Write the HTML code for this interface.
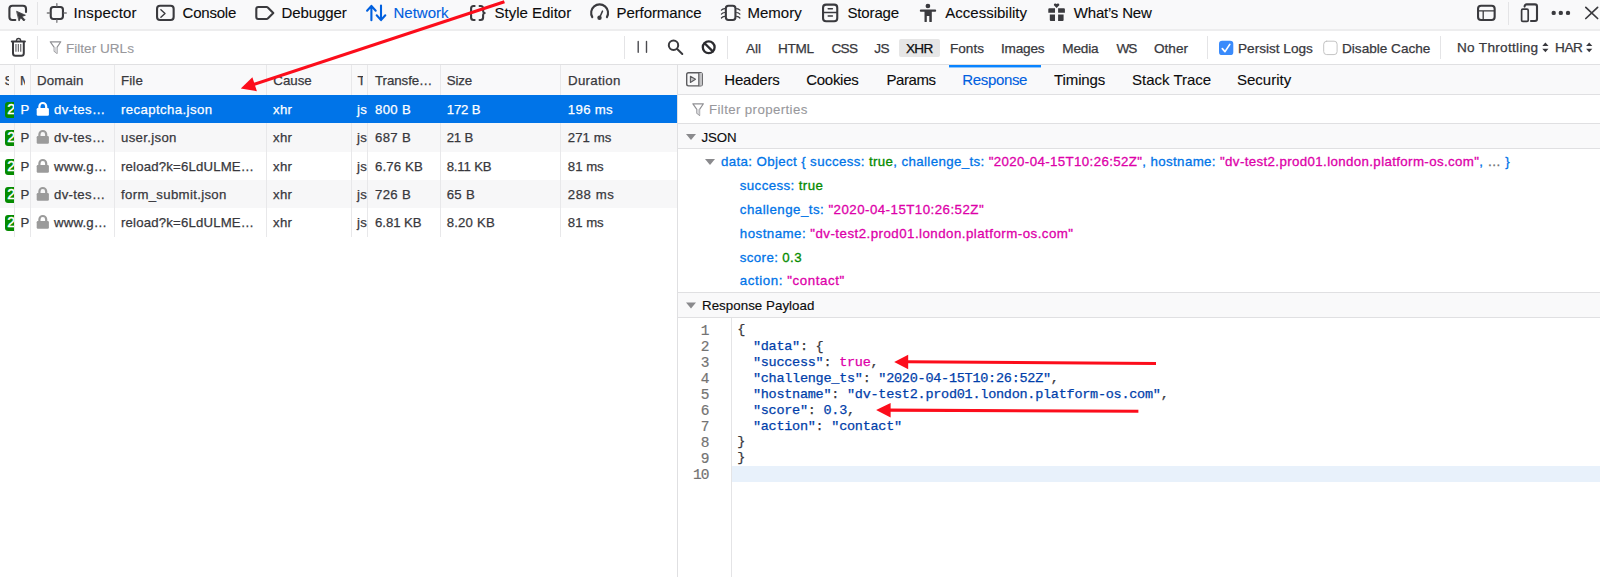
<!DOCTYPE html>
<html><head><meta charset="utf-8">
<style>
*{box-sizing:border-box;margin:0;padding:0}
html,body{width:1600px;height:577px;overflow:hidden;background:#fff}
body{position:relative;font-family:"Liberation Sans",sans-serif;color:#38383d}
.a{position:absolute;white-space:pre}
#tb{left:0;top:0;width:1600px;height:29px;background:#f9f9fa}
.hl{position:absolute;height:1px}
.tab{font-size:15px;line-height:20px;top:3.4px;color:#0c0c0d;margin-left:.5px;-webkit-text-stroke:.12px}
.tab.sel{color:#0060df}
.ic{position:absolute;overflow:visible}
.vsep{position:absolute;width:1px;background:#e4e4e6}
.ft{font-size:13.6px;line-height:20px;top:39px;color:#38383d;-webkit-text-stroke:.25px}
#hd{left:0;top:65px;width:677px;height:30px;background:#f9f9fa}
.ht{font-size:13.3px;line-height:20px;top:71px;color:#38383d;letter-spacing:.12px;-webkit-text-stroke:.25px}
.row{left:0;width:677px}
.cd{position:absolute;top:65px;width:1px;height:172px;background:#e8e8ea}
.ct{font-size:13.2px;line-height:20px;color:#38383d;letter-spacing:.33px;-webkit-text-stroke:.25px}
.w{color:#fff}
#rp{left:677px;top:65px;width:1px;height:512px;background:#e0e0e2}
#rt{left:678px;top:65px;width:922px;height:29px;background:#f9f9fa}
.rtab{font-size:15px;line-height:20px;top:69.6px;color:#0c0c0d;-webkit-text-stroke:.12px}
.sec{left:678px;width:922px;background:#f9f9fa;border-top:1px solid #e0e0e2;border-bottom:1px solid #e0e0e2}
.pv{font-size:13.3px;line-height:20px;-webkit-text-stroke:.3px}
.k{color:#0074e8}.s{color:#dd00a9}.n{color:#058b00}.g{color:#737373}
.ln{font-family:"Liberation Mono",monospace;font-size:14.5px;letter-spacing:-.9px;margin-top:-.3px;line-height:16px;color:#737373;text-align:right;left:678px;width:30.6px;-webkit-text-stroke:.2px}
.cl{font-family:"Liberation Mono",monospace;font-size:13.5px;letter-spacing:-.26px;line-height:16px;color:#38383d;left:737.2px;-webkit-text-stroke:.25px}
.cp{color:#003eaa}.cs{color:#003eaa}.ck{color:#dd00a9}
.ph{color:#98989c;-webkit-text-stroke:.1px}
</style></head><body>
<!-- top toolbar -->
<div id="tb" class="a"></div>
<div class="hl" style="left:0;top:29px;width:1600px;background:#ededee"></div>
<div class="hl" style="left:0;top:30px;width:1600px;background:#ededee"></div>
<div class="vsep" style="left:37px;top:2px;height:23px"></div>
<span class="a tab" style="left:73px;letter-spacing:0.17px">Inspector</span>
<span class="a tab" style="left:182px;letter-spacing:-0.2px">Console</span>
<span class="a tab" style="left:281px;letter-spacing:-0.1px">Debugger</span>
<span class="a tab sel" style="left:393px;letter-spacing:0px">Network</span>
<span class="a tab" style="left:494px;letter-spacing:0px">Style Editor</span>
<span class="a tab" style="left:616px;letter-spacing:-0.08px">Performance</span>
<span class="a tab" style="left:747px;letter-spacing:0px">Memory</span>
<span class="a tab" style="left:847px;letter-spacing:-0.15px">Storage</span>
<span class="a tab" style="left:944.8px;letter-spacing:0px">Accessibility</span>
<span class="a tab" style="left:1073.3px;letter-spacing:-0.2px">What’s New</span>
<div class="vsep" style="left:1508px;top:2px;height:23px"></div>
<!-- filter bar -->
<div class="hl" style="left:0;top:64px;width:1600px;background:#e0e0e2"></div>
<div class="vsep" style="left:37px;top:36px;height:23px"></div>
<span class="a ft ph" style="left:66px">Filter URLs</span>
<div class="vsep" style="left:624px;top:36px;height:23px"></div>
<div class="vsep" style="left:727px;top:36px;height:23px"></div>
<div class="a" style="left:899px;top:39px;width:41px;height:18px;background:#e6e6e6;border-radius:2px"></div>
<span class="a ft" style="left:746px;letter-spacing:0px;top:39px">All</span>
<span class="a ft" style="left:778px;letter-spacing:-0.3px;top:39px">HTML</span>
<span class="a ft" style="left:831.5px;letter-spacing:-0.7px;top:39px">CSS</span>
<span class="a ft" style="left:874.3px;letter-spacing:-0.5px;top:39px">JS</span>
<span class="a ft" style="left:906px;letter-spacing:-0.7px;top:39px;color:#0c0c0d">XHR</span>
<span class="a ft" style="left:950px;letter-spacing:0px;top:39px">Fonts</span>
<span class="a ft" style="left:1001px;letter-spacing:-0.2px;top:39px">Images</span>
<span class="a ft" style="left:1062.3px;letter-spacing:-0.2px;top:39px">Media</span>
<span class="a ft" style="left:1116.5px;letter-spacing:-1px;top:39px">WS</span>
<span class="a ft" style="left:1154px;letter-spacing:0px;top:39px">Other</span>
<span class="a ft" style="left:1238px;letter-spacing:0px;top:39px">Persist Logs</span>
<span class="a ft" style="left:1342px;letter-spacing:0px;top:39px">Disable Cache</span>
<span class="a ft" style="left:1457px;letter-spacing:0.3px;top:38px">No Throttling</span>
<span class="a ft" style="left:1555px;letter-spacing:-0.4px;top:38px">HAR</span>
<div class="vsep" style="left:1207px;top:36px;height:23px"></div>
<div class="vsep" style="left:1440px;top:36px;height:23px"></div>
<!-- table -->
<div id="hd" class="a"></div>
<div class="a row" style="top:123px;height:29px;background:#f7f7f8"></div>
<div class="a row" style="top:180px;height:28px;background:#f7f7f8"></div>
<div class="cd" style="left:14px"></div>
<div class="cd" style="left:30px"></div>
<div class="cd" style="left:114px"></div>
<div class="cd" style="left:266px"></div>
<div class="cd" style="left:351px"></div>
<div class="cd" style="left:367px"></div>
<div class="cd" style="left:440px"></div>
<div class="cd" style="left:560px"></div>
<div class="a row" style="top:95px;height:28px;background:#0074e8"></div>
<span class="a ht" style="left:37px;letter-spacing:0.12px">Domain</span>
<span class="a ht" style="left:121px;letter-spacing:0.12px">File</span>
<span class="a ht" style="left:273.3px;letter-spacing:0px">Cause</span>
<span class="a ht" style="left:375px;letter-spacing:-0.07px">Transfe…</span>
<span class="a ht" style="left:446.7px;letter-spacing:-0.1px">Size</span>
<span class="a ht" style="left:568px;letter-spacing:0.3px">Duration</span>
<div class="a" style="left:4px;top:66px;width:5.1px;height:26px;overflow:hidden"><span class="a ht" style="left:.5px;top:5px">S</span></div>
<div class="a" style="left:19px;top:66px;width:6.1px;height:26px;overflow:hidden"><span class="a ht" style="left:1px;top:5px">M</span></div>
<div class="a" style="left:356px;top:66px;width:7.1px;height:26px;overflow:hidden"><span class="a ht" style="left:1.6px;top:5px">T</span></div>
<div class="a" style="left:5px;top:102px;width:9px;height:15.6px;background:#058b00;border-radius:3px 0 0 3px;overflow:hidden"><span class="a" style="left:2.3px;top:-2.6px;color:#fff;font-size:14.5px;line-height:20px;-webkit-text-stroke:.45px">2</span></div>
<span class="a ct w" style="left:20.5px;top:99.9px">P</span>
<svg class="ic" style="left:36px;top:102px" width="14" height="14" viewBox="0 0 14 14"><path d="M3.4 7V4.4a3.4 3.4 0 0 1 6.8 0V7" fill="none" stroke="#fff" stroke-width="2.2"/><rect x="0.7" y="6" width="12.2" height="7.8" rx="1.2" fill="#fff"/></svg>
<span class="a ct w" style="left:54px;top:99.9px">dv-tes…</span>
<span class="a ct w" style="left:121px;top:99.9px;letter-spacing:0.4px">recaptcha.json</span>
<span class="a ct w" style="left:273px;top:99.9px">xhr</span>
<span class="a ct w" style="left:357px;top:99.9px">js</span>
<span class="a ct w" style="left:375px;top:99.9px">800 B</span>
<span class="a ct w" style="left:446.7px;top:99.9px;letter-spacing:-0.13px">172 B</span>
<span class="a ct w" style="left:567.8px;top:99.9px">196 ms</span>
<div class="a" style="left:5px;top:130px;width:9px;height:15.6px;background:#058b00;border-radius:3px 0 0 3px;overflow:hidden"><span class="a" style="left:2.3px;top:-2.6px;color:#fff;font-size:14.5px;line-height:20px;-webkit-text-stroke:.45px">2</span></div>
<span class="a ct" style="left:20.5px;top:128.2px">P</span>
<svg class="ic" style="left:36px;top:130px" width="14" height="14" viewBox="0 0 14 14"><path d="M3.4 7V4.4a3.4 3.4 0 0 1 6.8 0V7" fill="none" stroke="#9b9b9b" stroke-width="2.2"/><rect x="0.7" y="6" width="12.2" height="7.8" rx="1.2" fill="#9b9b9b"/></svg>
<span class="a ct" style="left:54px;top:128.2px">dv-tes…</span>
<span class="a ct" style="left:121px;top:128.2px">user.json</span>
<span class="a ct" style="left:273px;top:128.2px">xhr</span>
<span class="a ct" style="left:357px;top:128.2px">js</span>
<span class="a ct" style="left:375px;top:128.2px">687 B</span>
<span class="a ct" style="left:446.7px;top:128.2px;letter-spacing:-0.2px">21 B</span>
<span class="a ct" style="left:567.8px;top:128.2px;letter-spacing:0.05px">271 ms</span>
<div class="a" style="left:5px;top:159px;width:9px;height:15.6px;background:#058b00;border-radius:3px 0 0 3px;overflow:hidden"><span class="a" style="left:2.3px;top:-2.6px;color:#fff;font-size:14.5px;line-height:20px;-webkit-text-stroke:.45px">2</span></div>
<span class="a ct" style="left:20.5px;top:156.5px">P</span>
<svg class="ic" style="left:36px;top:159px" width="14" height="14" viewBox="0 0 14 14"><path d="M3.4 7V4.4a3.4 3.4 0 0 1 6.8 0V7" fill="none" stroke="#9b9b9b" stroke-width="2.2"/><rect x="0.7" y="6" width="12.2" height="7.8" rx="1.2" fill="#9b9b9b"/></svg>
<span class="a ct" style="left:54px;top:156.5px;letter-spacing:0.2px">www.g…</span>
<span class="a ct" style="left:121px;top:156.5px;letter-spacing:0.18px">reload?k=6LdULME…</span>
<span class="a ct" style="left:273px;top:156.5px">xhr</span>
<span class="a ct" style="left:357px;top:156.5px">js</span>
<span class="a ct" style="left:375px;top:156.5px;letter-spacing:0.15px">6.76 KB</span>
<span class="a ct" style="left:446.7px;top:156.5px;letter-spacing:-0.17px">8.11 KB</span>
<span class="a ct" style="left:567.8px;top:156.5px;letter-spacing:0px">81 ms</span>
<div class="a" style="left:5px;top:187px;width:9px;height:15.6px;background:#058b00;border-radius:3px 0 0 3px;overflow:hidden"><span class="a" style="left:2.3px;top:-2.6px;color:#fff;font-size:14.5px;line-height:20px;-webkit-text-stroke:.45px">2</span></div>
<span class="a ct" style="left:20.5px;top:184.8px">P</span>
<svg class="ic" style="left:36px;top:187px" width="14" height="14" viewBox="0 0 14 14"><path d="M3.4 7V4.4a3.4 3.4 0 0 1 6.8 0V7" fill="none" stroke="#9b9b9b" stroke-width="2.2"/><rect x="0.7" y="6" width="12.2" height="7.8" rx="1.2" fill="#9b9b9b"/></svg>
<span class="a ct" style="left:54px;top:184.8px">dv-tes…</span>
<span class="a ct" style="left:121px;top:184.8px">form_submit.json</span>
<span class="a ct" style="left:273px;top:184.8px">xhr</span>
<span class="a ct" style="left:357px;top:184.8px">js</span>
<span class="a ct" style="left:375px;top:184.8px">726 B</span>
<span class="a ct" style="left:446.7px;top:184.8px">65 B</span>
<span class="a ct" style="left:567.8px;top:184.8px;letter-spacing:0.55px">288 ms</span>
<div class="a" style="left:5px;top:215px;width:9px;height:15.6px;background:#058b00;border-radius:3px 0 0 3px;overflow:hidden"><span class="a" style="left:2.3px;top:-2.6px;color:#fff;font-size:14.5px;line-height:20px;-webkit-text-stroke:.45px">2</span></div>
<span class="a ct" style="left:20.5px;top:213.1px">P</span>
<svg class="ic" style="left:36px;top:215px" width="14" height="14" viewBox="0 0 14 14"><path d="M3.4 7V4.4a3.4 3.4 0 0 1 6.8 0V7" fill="none" stroke="#9b9b9b" stroke-width="2.2"/><rect x="0.7" y="6" width="12.2" height="7.8" rx="1.2" fill="#9b9b9b"/></svg>
<span class="a ct" style="left:54px;top:213.1px;letter-spacing:0.2px">www.g…</span>
<span class="a ct" style="left:121px;top:213.1px;letter-spacing:0.18px">reload?k=6LdULME…</span>
<span class="a ct" style="left:273px;top:213.1px">xhr</span>
<span class="a ct" style="left:357px;top:213.1px">js</span>
<span class="a ct" style="left:375px;top:213.1px;letter-spacing:-0.06px">6.81 KB</span>
<span class="a ct" style="left:446.7px;top:213.1px;letter-spacing:0.2px">8.20 KB</span>
<span class="a ct" style="left:567.8px;top:213.1px;letter-spacing:0px">81 ms</span>
<!-- right panel -->
<div id="rp" class="a"></div>
<div id="rt" class="a"></div>
<div class="hl" style="left:678px;top:94px;width:922px;background:#e0e0e2"></div>
<span class="a rtab" style="left:724.3px;letter-spacing:-0.2px">Headers</span>
<span class="a rtab" style="left:806.3px;letter-spacing:-0.3px">Cookies</span>
<span class="a rtab" style="left:886.5px;letter-spacing:-0.45px">Params</span>
<span class="a rtab" style="left:962.3px;letter-spacing:-0.35px;color:#0060df">Response</span>
<span class="a rtab" style="left:1054px;letter-spacing:-0.1px">Timings</span>
<span class="a rtab" style="left:1132px;letter-spacing:0px">Stack Trace</span>
<span class="a rtab" style="left:1237px;letter-spacing:0px">Security</span>
<div class="a" style="left:949px;top:67px;width:91.5px;height:1px;background:#0a84ff;opacity:.45"></div>
<div class="a" style="left:949px;top:65px;width:91.5px;height:2px;background:#0a84ff"></div>
<span class="a pv ph" style="left:709px;top:99.5px;letter-spacing:.37px">Filter properties</span>
<div class="a sec" style="top:123px;height:26px"></div>
<span class="a pv" style="left:701.5px;top:127.9px;color:#0c0c0d;letter-spacing:-.14px;-webkit-text-stroke:.15px">JSON</span>
<div class="a sec" style="top:292px;height:26px"></div>
<span class="a pv" style="left:702px;top:295.6px;color:#0c0c0d;letter-spacing:.05px;-webkit-text-stroke:.15px">Response Payload</span>
<!-- json tree -->
<span class="a pv" style="left:721px;top:152.2px;letter-spacing:.372px"><span class="k">data: Object { success: </span><span class="n">true</span><span class="k">, challenge_ts: </span><span class="s">"2020-04-15T10:26:52Z"</span><span class="k">, hostname: </span><span class="s">"dv-test2.prod01.london.platform-os.com"</span><span class="k">, </span><span class="g">…</span><span class="k"> }</span></span>
<span class="a pv" style="left:739.8px;top:176.2px;letter-spacing:0.39px"><span class="k">success: </span><span class="n">true</span></span>
<span class="a pv" style="left:739.8px;top:200.2px;letter-spacing:0.466px"><span class="k">challenge_ts: </span><span class="s">"2020-04-15T10:26:52Z"</span></span>
<span class="a pv" style="left:739.8px;top:224px;letter-spacing:0.469px"><span class="k">hostname: </span><span class="s">"dv-test2.prod01.london.platform-os.com"</span></span>
<span class="a pv" style="left:739.8px;top:247.5px;letter-spacing:0.37px"><span class="k">score: </span><span class="n">0.3</span></span>
<span class="a pv" style="left:739.8px;top:271.2px;letter-spacing:0.577px"><span class="k">action: </span><span class="s">"contact"</span></span>
<!-- code -->
<div class="a" style="left:678px;top:318px;width:54px;height:259px;background:#fff;border-right:1px solid #e4e4e6"></div>
<div class="a" style="left:732px;top:466px;width:868px;height:16px;background:#e8f1fb"></div>
<span class="a ln" style="top:323.2px">1</span>
<span class="a cl" style="top:322.4px">{</span>
<span class="a ln" style="top:339.2px">2</span>
<span class="a cl" style="top:339.2px">  <span class="cp">"data"</span>: {</span>
<span class="a ln" style="top:355.2px">3</span>
<span class="a cl" style="top:355.2px">  <span class="cp">"success"</span>: <span class="ck">true</span>,</span>
<span class="a ln" style="top:371.2px">4</span>
<span class="a cl" style="top:371.2px">  <span class="cp">"challenge_ts"</span>: <span class="cs">"2020-04-15T10:26:52Z"</span>,</span>
<span class="a ln" style="top:387.2px">5</span>
<span class="a cl" style="top:387.2px">  <span class="cp">"hostname"</span>: <span class="cs">"dv-test2.prod01.london.platform-os.com"</span>,</span>
<span class="a ln" style="top:403.2px">6</span>
<span class="a cl" style="top:403.2px">  <span class="cp">"score"</span>: <span class="cs">0.3</span>,</span>
<span class="a ln" style="top:419.2px">7</span>
<span class="a cl" style="top:419.2px">  <span class="cp">"action"</span>: <span class="cs">"contact"</span></span>
<span class="a ln" style="top:435.2px">8</span>
<span class="a cl" style="top:434.4px">}</span>
<span class="a ln" style="top:451.2px">9</span>
<span class="a cl" style="top:450.4px">}</span>
<span class="a ln" style="top:467.2px">10</span>
<!-- icons -->
<svg class="ic" style="left:0;top:0" width="1600" height="577" viewBox="0 0 1600 577" fill="none" stroke-linecap="round" stroke-linejoin="round">
<g stroke="#3a3a3e" stroke-width="2.1">
<path d="M15.3 19.95H12.4a3 3 0 0 1-3-3V8.75a3 3 0 0 1 3-3H23a3 3 0 0 1 3 3V12"/>
<path d="M16.9 11.4L25.4 15.2L21.9 16.6L25 19.8L23.8 21L20.7 17.8L19.2 20.7Z" fill="#3a3a3e" stroke-width=".8"/>
<rect x="50.75" y="7.05" width="12.2" height="11.9" rx="2.6"/>
<path d="M56.85 3.6V6M56.85 20V22.3M47.3 13H49.7M64 13H66.3" stroke-width="1.3" stroke="#77777a"/>
<rect x="157.05" y="5.75" width="16.6" height="14.25" rx="3"/>
<path d="M160.9 9.8L165 13.5L160.9 17.2" stroke-width="1.4"/>
<path d="M258.3 7.05H266.6a1.6 1.6 0 0 1 1.2.55L273.3 13L267.8 18.4a1.6 1.6 0 0 1-1.2.55H258.3a2 2 0 0 1-2-2V9.05a2 2 0 0 1 2-2Z"/>
<path d="M474.6 6H473.6a2.5 2.5 0 0 0-2.5 2.5V11q0 1.7-1.3 2q1.3.3 1.3 2V17.5a2.5 2.5 0 0 0 2.5 2.5H474.6"/>
<path d="M479.6 6H480.6a2.5 2.5 0 0 1 2.5 2.5V11q0 1.7 1.6 2q-1.6.3-1.6 2V17.5a2.5 2.5 0 0 1-2.5 2.5H479.6"/>
<path d="M592.3 17.1A8.45 8.45 0 1 1 606.9 17.1"/>
<circle cx="599.5" cy="17.7" r="2.2" fill="#3a3a3e" stroke="none"/><path d="M599.8 17.2L602.5 11.1" stroke-width="1.5"/>
<rect x="725.85" y="5.75" width="9.6" height="14.2" rx="2.6"/>
<path d="M724.6 8.6Q722.6 8.8 721.4 10.2M724.6 12.5Q722.6 12.7 721.4 14.1M724.6 16.4Q722.6 16.6 721.4 18M736.7 8.6Q738.7 8.8 739.9 10.2M736.7 12.5Q738.7 12.7 739.9 14.1M736.7 16.4Q738.7 16.6 739.9 18" stroke-width="1.2"/>
<rect x="823.05" y="4.65" width="14.2" height="16.6" rx="3"/>
<path d="M823.5 12.5H836.8" stroke-width="1.3"/><path d="M828.2 8.8H832.4M828.2 16H832.4" stroke-width="1.5"/>
<rect x="1478.05" y="5.75" width="16.6" height="14.2" rx="3"/>
<path d="M1478.6 10.9H1494.2M1483.2 11.2V19.6" stroke-width="1.3"/>
<rect x="1521.6" y="9.2" width="6.6" height="12.2" rx="1.2" stroke-width="1.7"/>
<path d="M1524.6 6.6V6.4a2 2 0 0 1 2-2H1535a2 2 0 0 1 2 2V19a2 2 0 0 1-2 2H1531"/>
<path d="M1585.8 7.3L1597.6 18.5M1597.6 7.3L1585.8 18.5" stroke-width="1.7"/>
</g>
<g stroke="#0060df" stroke-width="2.1"><path d="M371.4 20.3V6M367.1 10.7L371.4 5.9L375.7 10.7"/><path d="M381 5.6V19.9M376.7 15.3L381 20.1L385.3 15.3"/></g>
<g fill="#3a3a3e" stroke="none"><circle cx="927.9" cy="6" r="2.35"/><rect x="919.8" y="9.6" width="16.4" height="2.1" rx="1.05"/><path d="M924.5 10.6H931.8V21.4a.7.7 0 0 1-.7.7H930a.7.7 0 0 1-.7-.7V16.1H926.8V21.4a.7.7 0 0 1-.7.7H925.2a.7.7 0 0 1-.7-.7Z"/></g>
<g fill="#3a3a3e" stroke="none"><path d="M1056.6 7.9L1053.9 5.3a1.5 1.5 0 0 1 2.7-1.2a1.5 1.5 0 0 1 2.7 1.2Z"/><path d="M1049.3 8.3H1055V12.7H1048.3V9.3a1 1 0 0 1 1-1ZM1058.1 8.3H1063.9a1 1 0 0 1 1 1V12.7H1058.1Z"/><path d="M1049.8 14.5H1055V21H1050.8a1 1 0 0 1-1-1ZM1058.1 14.5H1063.6V20a1 1 0 0 1-1 1H1058.1Z"/><circle cx="1553.7" cy="12.9" r="2.2"/><circle cx="1560.8" cy="12.9" r="2.2"/><circle cx="1568" cy="12.9" r="2.2"/></g>
<g stroke="#3a3a3e" stroke-width="2">
<path d="M11.8 41.4H24.9"/><path d="M16.4 40.3a2.2 2.2 0 0 1 4.3 0" stroke-width="1.5"/>
<path d="M13 42V53.2a2.5 2.5 0 0 0 2.5 2.5H21.3a2.5 2.5 0 0 0 2.5-2.5V42"/>
<path d="M15.95 44V51.8M18.35 44V51.8M20.7 44V51.8" stroke-width="1.2" stroke="#6a6a6e" stroke-linecap="butt"/>
<path d="M638.2 41.4V52.2M646.5 41.4V52.2" stroke-width="1.4" stroke="#4a4a4f"/>
<circle cx="673.5" cy="45.3" r="4.7"/><path d="M677.2 49L682.3 54"/>
<circle cx="708.7" cy="47.3" r="5.9" stroke="#2c2c30" stroke-width="2.3"/><path d="M704.6 43.2L712.8 51.4" stroke="#2c2c30" stroke-width="2.3"/>
</g>
<path d="M50.300000000000004 41.800000000000004H60.800000000000004L57.0 47.400000000000006V53.300000000000004L54.2 51.0V47.400000000000006Z" fill="none" stroke="#909094" stroke-width="1.15" stroke-linejoin="round"/><path d="M54.2 47.2H57.0V53.300000000000004L54.2 51.0Z" fill="#d4d4d7"/>
<rect x="1219" y="40.8" width="14.3" height="14.3" rx="3.2" fill="#3a8bfb"/><path d="M1222.3 48.6L1225 51.6L1229.8 44.4" stroke="#fff" stroke-width="1.7"/>
<rect x="1323.7" y="41.2" width="13.4" height="13.4" rx="3" fill="#fff" stroke="#c4c4c4" stroke-width="1"/>
<path d="M1542.3000000000002 46L1545.4 42.4L1548.5 46Z" fill="#38383d"/><path d="M1542.3000000000002 48.8L1545.4 52.3L1548.5 48.8Z" fill="#38383d"/>
<path d="M1586.1000000000001 46L1589.2 42.4L1592.3 46Z" fill="#38383d"/><path d="M1586.1000000000001 48.8L1589.2 52.3L1592.3 48.8Z" fill="#38383d"/>
<rect x="686.7" y="72.7" width="15.5" height="13.2" rx="1.8" stroke="#5c5c5f" stroke-width="1.4"/><rect x="698.8" y="73" width="3.2" height="12.6" fill="#c4c4c6"/><path d="M698.8 73V85.6" stroke="#5c5c5f" stroke-width="1.2"/><path d="M690.4 76.2L695.5 79.3L690.4 82.5Z" fill="#c4c4c6" stroke="#5c5c5f" stroke-width="1.1"/>
<path d="M692.9 103.8H703.4L699.5999999999999 109.4V115.3L696.8 113.0V109.4Z" fill="none" stroke="#909094" stroke-width="1.15" stroke-linejoin="round"/><path d="M696.8 109.2H699.5999999999999V115.3L696.8 113.0Z" fill="#d4d4d7"/>
<path d="M686 134H696L691 140Z" fill="#8a8a8d"/>
<path d="M705 159H715L710 165Z" fill="#8a8a8d"/>
<path d="M686 302.4H696L691 308.4Z" fill="#8a8a8d"/>
</svg>
<!-- annotations -->
<svg class="ic" style="left:0;top:0" width="1600" height="577" viewBox="0 0 1600 577">
<g stroke="#fc0d1b" stroke-width="3.1" fill="#fc0d1b" stroke-linecap="butt">
<line x1="504.4" y1="1.8" x2="253" y2="84.6"/>
<path d="M240.8 88.6L252.4 77.3L256.9 91.2Z" stroke="none"/>
<line x1="1156" y1="363.5" x2="906" y2="361.7"/>
<path d="M894.2 362L908.2 354.7L908.2 369.3Z" stroke="none"/>
<line x1="1138.4" y1="411.3" x2="888" y2="410.1"/>
<path d="M876.1 410.1L890.6 403L890.6 417.4Z" stroke="none"/>
</g></svg>
</body></html>
